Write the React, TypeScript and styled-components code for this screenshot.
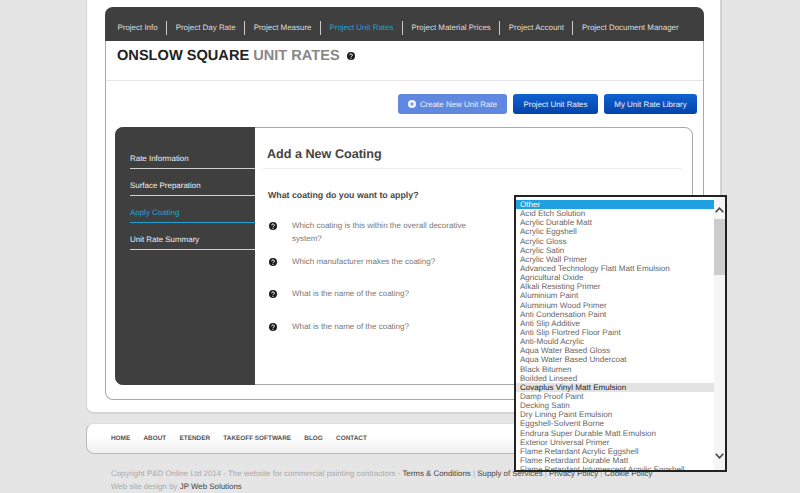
import React from 'react'
import styled, { createGlobalStyle } from 'styled-components'

const GlobalStyle = createGlobalStyle`
  html, body {
    margin: 0;
    height: 100%;
    overflow: hidden;
    background: #e5e5e5;
    font-family: "Liberation Sans", Arial, sans-serif;
    text-rendering: geometricPrecision;
  }
`

const Page = styled.div`
  position: relative;
  width: 800px;
  height: 493px;
  overflow: hidden;
`

const Panel = styled.main`
  box-sizing: border-box;
  width: 636px;
  height: 414px;
  margin-left: 86px;
  padding: 7px 18px 0 18px;
  background: #fff;
  border: 2px solid #d4d4d4;
  border-top: 0;
  border-left-width: 1px;
  border-radius: 0 0 8px 8px;
`

const Frame = styled.div`
  box-sizing: border-box;
  width: 599px;
  height: 393px;
  border: 1px solid #a9a9a9;
  border-top: 0;
  border-radius: 8px 8px 8px 8px;
`

const TopNav = styled.nav`
  display: flex;
  align-items: center;
  height: 34px;
  margin: 0 -1px;
  padding: 8px 0 0 4px;
  box-sizing: border-box;
  background: #3f3f3f;
  border-radius: 8px 8px 0 0;
`

const TopLink = styled.a<{ $active?: boolean; $last?: boolean }>`
  padding: 0 8.5px;
  font-size: 7.95px;
  line-height: 14px;
  white-space: nowrap;
  color: ${p => (p.$active ? '#1ba3d6' : '#dedede')};
  border-right: ${p => (p.$last ? '0' : '1px solid #c9c9c9')};
`

const TitleBar = styled.header`
  display: flex;
  align-items: center;
  gap: 7px;
  height: 40px;
  padding: 0 0 10px 11px;
  box-sizing: border-box;
  border-bottom: 1px solid #e6e6e6;
`

const Title = styled.h1`
  margin: 0;
  font-size: 14.6px;
  font-weight: bold;
  color: #222;
  white-space: nowrap;
`

const TitleMuted = styled.span`
  color: #888;
`

const Toolbar = styled.div`
  display: flex;
  justify-content: flex-end;
  gap: 6px;
  height: 46px;
  padding: 13px 6px 0 0;
  box-sizing: border-box;
`

const ActionButton = styled.a<{ $width: number; $light?: boolean }>`
  display: flex;
  align-items: center;
  justify-content: center;
  gap: 4px;
  box-sizing: border-box;
  width: ${p => p.$width}px;
  height: 20px;
  font-size: 7.95px;
  color: #eef2fb;
  border-radius: 3px;
  background: ${p => (p.$light ? '#6088e0' : 'linear-gradient(#0f62d2, #0443a8)')};
`

const Card = styled.section`
  box-sizing: border-box;
  display: flex;
  width: 578px;
  height: 258px;
  margin-left: 9px;
  border: 1px solid #a9a9a9;
  border-radius: 8px;
`

const Sidebar = styled.aside`
  box-sizing: border-box;
  width: 140px;
  margin: -1px 0 -1px -1px;
  padding: 15px 0 0 15px;
  background: #3f3f3f;
  border-radius: 8px 0 0 8px;
`

const SideLink = styled.a<{ $active?: boolean }>`
  display: block;
  box-sizing: border-box;
  height: 27px;
  padding-top: 11px;
  font-size: 7.95px;
  line-height: 12px;
  color: ${p => (p.$active ? '#1ba3d6' : '#f0f0f0')};
  border-bottom: 1px solid ${p => (p.$active ? '#1ba3d6' : '#cfcfcf')};
`

const Content = styled.div`
  flex: 1;
  padding: 0 10px 0 8px;
`

const Heading = styled.h2`
  box-sizing: border-box;
  height: 41px;
  margin: 0;
  padding: 18px 0 0 4px;
  font-size: 12.6px;
  line-height: 16px;
  font-weight: bold;
  color: #444;
  border-bottom: 1px solid #eee;
`

const Question = styled.h3`
  margin: 20px 0 18px 5px;
  font-size: 8.8px;
  line-height: 12px;
  font-weight: bold;
  color: #4a4a4a;
`

const QuestionRow = styled.div<{ $height: number }>`
  display: flex;
  gap: 15px;
  height: ${p => p.$height}px;
  padding-left: 6px;
`

const QuestionText = styled.p`
  width: 190px;
  margin: 0;
  font-size: 8px;
  line-height: 13px;
  color: #777;
`

const IconSlot = styled.span`
  flex: none;
  display: flex;
  height: 13px;
  align-items: center;
`

const FooterBar = styled.nav`
  box-sizing: border-box;
  display: flex;
  align-items: center;
  gap: 13.3px;
  width: 636px;
  height: 31px;
  margin: 9px 0 0 86px;
  padding-left: 24px;
  background: linear-gradient(#fff 40%, #f0f0f0);
  border: 1px solid #bbb;
  border-top-color: #e0e0e0;
  border-radius: 8px;
`

const FooterLink = styled.a`
  font-size: 6.4px;
  font-weight: bold;
  color: #555;
  white-space: nowrap;
`

const Legal = styled.footer`
  margin: 13px 0 0 111px;
  font-size: 7.9px;
  line-height: 13px;
  color: #aaa;
  white-space: nowrap;
`

const LegalLink = styled.a`
  color: #444;
`

const Dropdown = styled.div`
  position: absolute;
  left: 514px;
  top: 195px;
  box-sizing: border-box;
  display: flex;
  width: 213px;
  height: 277px;
  background: #fff;
  border: 2px solid #222;
  overflow: hidden;
`

const OptionList = styled.ul`
  flex: 1;
  margin: 0;
  padding: 3px 0 0 0;
  list-style: none;
`

const Option = styled.li<{ $selected?: boolean; $hover?: boolean }>`
  height: 9.15px;
  padding-left: 4px;
  font-size: 8.05px;
  line-height: 9.15px;
  white-space: nowrap;
  color: ${p => (p.$selected ? '#fff' : p.$hover ? '#222' : '#666')};
  background: ${p => (p.$selected ? '#1fa0e0' : p.$hover ? '#e3e3e3' : 'transparent')};
`

const Scrollbar = styled.div`
  position: relative;
  flex: none;
  width: 11px;
  background: #f5f5f5;
`

const ScrollThumb = styled.div`
  position: absolute;
  top: 22px;
  left: 0;
  width: 100%;
  height: 56px;
  background: #cdcdcd;
`

const ScrollArrow = styled.svg<{ $down?: boolean }>`
  position: absolute;
  left: 1px;
  ${p => (p.$down ? 'bottom: 11px;' : 'top: 10px;')}
  width: 9px;
  height: 6px;
  fill: none;
  stroke: #444;
  stroke-width: 1.6;
`

const options = [
  'Other',
  'Acid Etch Solution',
  'Acrylic Durable Matt',
  'Acrylic Eggshell',
  'Acrylic Gloss',
  'Acrylic Satin',
  'Acrylic Wall Primer',
  'Advanced Technology Flatt Matt Emulsion',
  'Agricultural Oxide',
  'Alkali Resisting Primer',
  'Aluminium Paint',
  'Aluminium Wood Primer',
  'Anti Condensation Paint',
  'Anti Slip Additive',
  'Anti Slip Flortred Floor Paint',
  'Anti-Mould Acrylic',
  'Aqua Water Based Gloss',
  'Aqua Water Based Undercoat',
  'Black Bitumen',
  'Boilded Linseed',
  'Covaplus Vinyl Matt Emulsion',
  'Damp Proof Paint',
  'Decking Satin',
  'Dry Lining Paint Emulsion',
  'Eggshell-Solvent Borne',
  'Endrura Super Durable Matt Emulsion',
  'Exterior Universal Primer',
  'Flame Retardant Acrylic Eggshell',
  'Flame Retardant Durable Matt',
  'Flame Retardant Intumescent Acrylic Eggshell',
]

const navItems = [
  'Project Info',
  'Project Day Rate',
  'Project Measure',
  'Project Unit Rates',
  'Project Material Prices',
  'Project Account',
  'Project Document Manager',
]

const sideItems = ['Rate Information', 'Surface Preparation', 'Apply Coating', 'Unit Rate Summary']

const questions = [
  { text: 'Which coating is this within the overall decorative system?', height: 36 },
  { text: 'Which manufacturer makes the coating?', height: 32 },
  { text: 'What is the name of the coating?', height: 33 },
  { text: 'What is the name of the coating?', height: 33 },
]

const footerItems = ['HOME', 'ABOUT', 'ETENDER', 'TAKEOFF SOFTWARE', 'BLOG', 'CONTACT']

const HelpIcon = () => (
  <svg width="8" height="8" viewBox="0 0 16 16">
    <circle cx="8" cy="8" r="8" fill="#1c1c1c" />
    <path d="M5.4 6.4a2.6 2.6 0 1 1 3.8 2.3c-.8.4-1.2.8-1.2 1.5" fill="none" stroke="#fff" strokeWidth="2" />
    <circle cx="8" cy="12.6" r="1.2" fill="#fff" />
  </svg>
)

const PlusIcon = () => (
  <svg width="8" height="8" viewBox="0 0 16 16">
    <circle cx="8" cy="8" r="8" fill="#f4f6fc" />
    <path d="M8 4.5v7M4.5 8h7" stroke="#6088e0" strokeWidth="2.4" />
  </svg>
)

export default function App() {
  return (
    <Page>
      <GlobalStyle />
      <Panel>
        <Frame>
          <TopNav>
            {navItems.map((item, i) => (
              <TopLink key={item} $active={i === 3} $last={i === navItems.length - 1}>
                {item}
              </TopLink>
            ))}
          </TopNav>
          <TitleBar>
            <Title>
              ONSLOW SQUARE <TitleMuted>UNIT RATES</TitleMuted>
            </Title>
            <HelpIcon />
          </TitleBar>
          <Toolbar>
            <ActionButton $width={109} $light>
              <PlusIcon />
              Create New Unit Rate
            </ActionButton>
            <ActionButton $width={85}>Project Unit Rates</ActionButton>
            <ActionButton $width={93}>My Unit Rate Library</ActionButton>
          </Toolbar>
          <Card>
            <Sidebar>
              {sideItems.map((item, i) => (
                <SideLink key={item} $active={i === 2}>
                  {item}
                </SideLink>
              ))}
            </Sidebar>
            <Content>
              <Heading>Add a New Coating</Heading>
              <Question>What coating do you want to apply?</Question>
              {questions.map((q, i) => (
                <QuestionRow key={i} $height={q.height}>
                  <IconSlot>
                    <HelpIcon />
                  </IconSlot>
                  <QuestionText>{q.text}</QuestionText>
                </QuestionRow>
              ))}
            </Content>
          </Card>
        </Frame>
      </Panel>
      <FooterBar>
        {footerItems.map(item => (
          <FooterLink key={item}>{item}</FooterLink>
        ))}
      </FooterBar>
      <Legal>
        Copyright P&amp;D Online Ltd 2014 - The website for commercial painting contractors -{' '}
        <LegalLink>Terms &amp; Conditions</LegalLink> | <LegalLink>Supply of Services</LegalLink> |{' '}
        <LegalLink>Privacy Policy</LegalLink> | <LegalLink>Cookie Policy</LegalLink>
        <br />
        Web site design by <LegalLink>JP Web Solutions</LegalLink>
      </Legal>
      <Dropdown>
        <OptionList>
          {options.map((option, i) => (
            <Option key={option} $selected={i === 0} $hover={i === 20}>
              {option}
            </Option>
          ))}
        </OptionList>
        <Scrollbar>
          <ScrollArrow viewBox="0 0 9 6">
            <path d="M.7 5.2 4.5 1.2l3.8 4" />
          </ScrollArrow>
          <ScrollThumb />
          <ScrollArrow $down viewBox="0 0 9 6">
            <path d="M.7.8l3.8 4 3.8-4" />
          </ScrollArrow>
        </Scrollbar>
      </Dropdown>
    </Page>
  )
}
